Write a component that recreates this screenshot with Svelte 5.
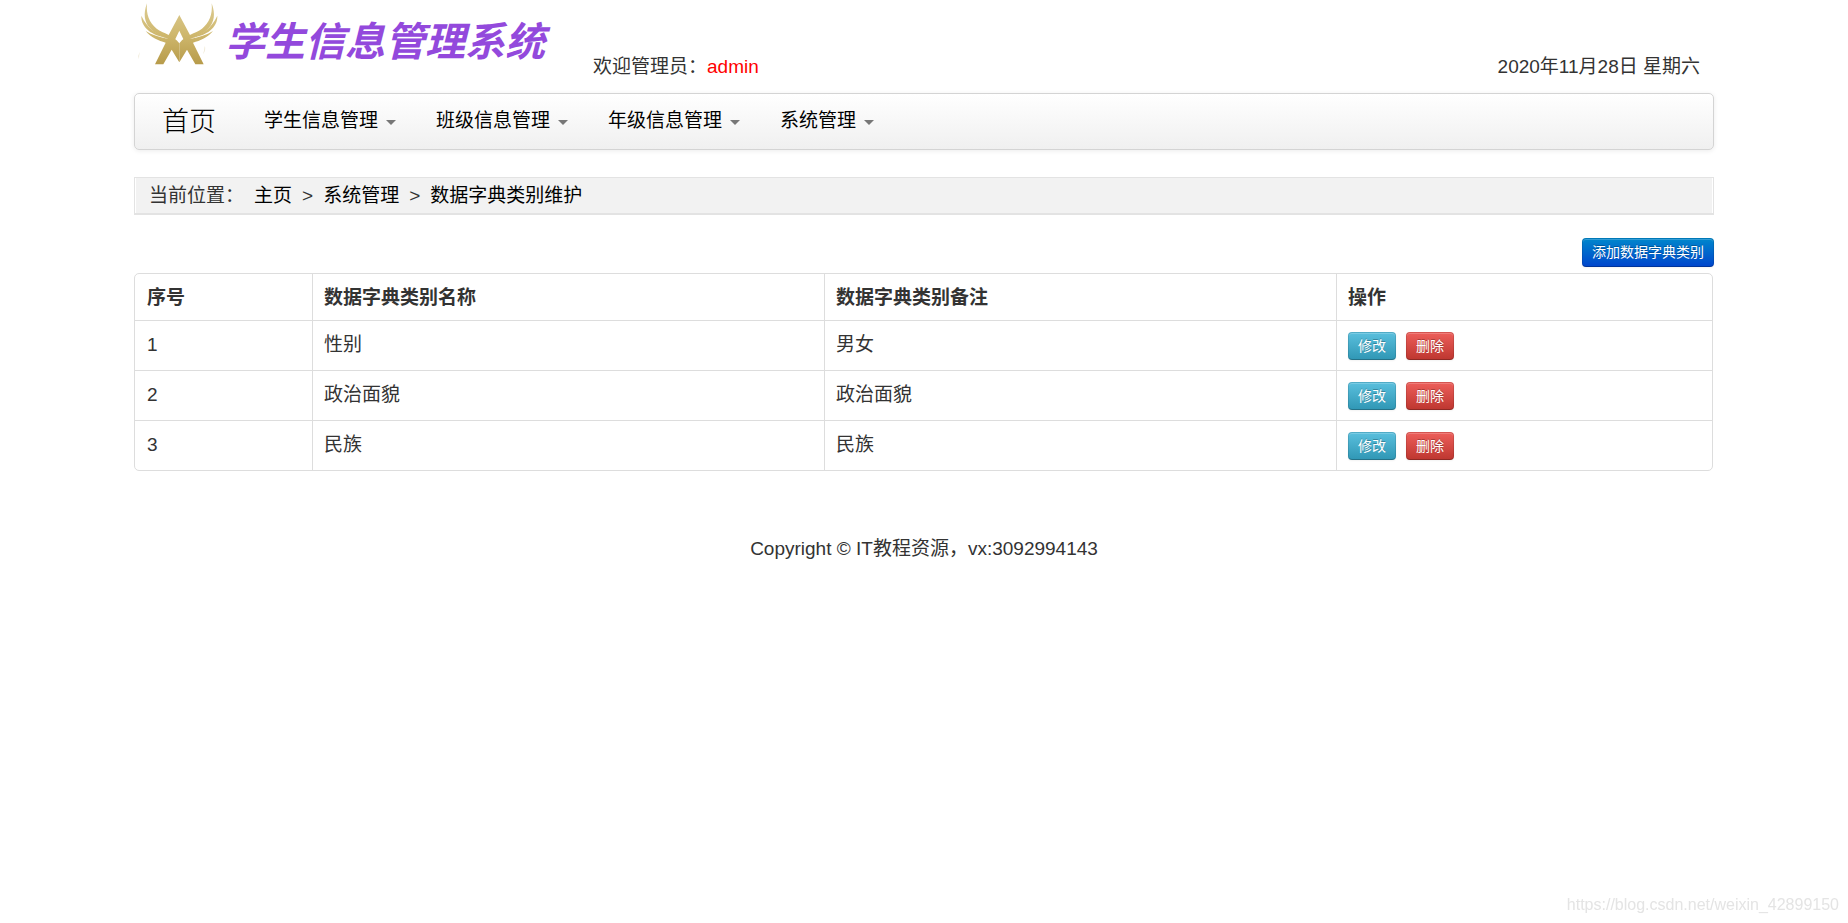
<script>
  const menus = ['学生信息管理', '班级信息管理', '年级信息管理', '系统管理'];
  const rows = [
    { id: 1, name: '性别', note: '男女' },
    { id: 2, name: '政治面貌', note: '政治面貌' },
    { id: 3, name: '民族', note: '民族' }
  ];
</script>

{#snippet wing()}
  <path d="M81 10 C78 45 88 68 110 86 C130 101 160 104 178 130 L178 187 L155 149 L130 193 H105 L137 128 C116 122 92 112 77 93 C96 105 118 111 146 117 C104 103 56 76 81 10 Z" />
  <path d="M64 47 C63 84 96 106 142 114 C108 101 82 86 64 47 Z" />
{/snippet}

<div class="container">
  <header>
    <a class="logo" href="#home" aria-label="学生信息管理系统">
      <svg viewBox="0 0 261 210" aria-hidden="true">
        <defs>
          <linearGradient id="gold" gradientUnits="userSpaceOnUse" x1="0" y1="10" x2="0" y2="193">
            <stop offset="0" stop-color="#dccb92" />
            <stop offset="0.5" stop-color="#cfb86e" />
            <stop offset="1" stop-color="#b79b4a" />
          </linearGradient>
        </defs>
        <g transform="translate(-42 0)" fill="url(#gold)">
          <path d="M178 45 L212 109 Q200 112 191 119 L178 92 L165 119 Q156 112 144 109 Z" />
          {@render wing()}
          <g transform="translate(356 0) scale(-1 1)">{@render wing()}</g>
          <path opacity="0.3" d="M59 155 Q53 166 57 178 Q57 166 59 155 Z M254 138 Q259 148 249 163 Q254 151 254 138 Z" />
        </g>
      </svg>
      <span>学生信息管理系统</span>
    </a>
    <p class="welcome">欢迎管理员：<strong>admin</strong></p>
    <time datetime="2020-11-28">2020年11月28日 星期六</time>
  </header>

  <nav class="navbar">
    <a class="brand" href="#home">首页</a>
    {#each menus as menu}
      <a class="menu" href="#menu">{menu}<i class="caret"></i></a>
    {/each}
  </nav>

  <nav class="breadcrumb" aria-label="当前位置">
    <span>当前位置：</span>
    <a href="#home">主页</a>
    <span>&gt;</span>
    <a href="#system">系统管理</a>
    <span>&gt;</span>
    <a href="#dictionary">数据字典类别维护</a>
  </nav>

  <main>
    <div class="toolbar">
      <button class="btn primary" type="button">添加数据字典类别</button>
    </div>
    <table>
      <colgroup>
        <col class="c-id" /><col class="c-text" /><col class="c-text" /><col />
      </colgroup>
      <thead>
        <tr>
          <th>序号</th>
          <th>数据字典类别名称</th>
          <th>数据字典类别备注</th>
          <th>操作</th>
        </tr>
      </thead>
      <tbody>
        {#each rows as row (row.id)}
          <tr>
            <td>{row.id}</td>
            <td>{row.name}</td>
            <td>{row.note}</td>
            <td>
              <div class="actions">
                <button class="btn info" type="button">修改</button>
                <button class="btn danger" type="button">删除</button>
              </div>
            </td>
          </tr>
        {/each}
      </tbody>
    </table>
  </main>

  <footer>Copyright © IT教程资源，vx:3092994143</footer>
</div>
<div class="watermark">https://blog.csdn.net/weixin_42899150</div>

<style>
  :global(body) {
    background: #fff;
  }
  .container,
  .watermark,
  .btn {
    font-family: 'Liberation Sans', 'Noto Sans CJK SC', sans-serif;
  }
  .container {
    box-sizing: border-box;
    max-width: 1620px;
    margin: 0 auto;
    padding: 0 20px;
    color: #333;
    font-size: 19px;
    font-weight: 400;
    line-height: 26px;
  }
  a {
    color: #000;
    text-decoration: none;
  }
  header {
    display: flex;
    align-items: flex-end;
    height: 80px;
    margin-bottom: 13px;
  }
  .logo {
    display: flex;
    align-self: flex-start;
    width: 459px;
  }
  .logo svg {
    width: 87px;
    height: 70px;
    flex: none;
  }
  .logo span {
    margin-left: 4px;
    padding-top: 14px;
    color: #9349dc;
    font-size: 40px;
    font-style: italic;
    font-weight: 700;
    line-height: 56px;
    white-space: nowrap;
  }
  .welcome {
    margin: 0;
  }
  .welcome strong {
    color: #f00;
    font-weight: 400;
  }
  time {
    margin-left: auto;
    padding-right: 14px;
  }
  .navbar {
    display: flex;
    align-items: center;
    height: 55px;
    padding: 0 8px;
    border: 1px solid #d4d4d4;
    border-radius: 5px;
    background: linear-gradient(#fff, #f0f0f0);
    box-shadow: 0 1px 5px rgba(0, 0, 0, 0.08);
  }
  .brand {
    padding: 0 28px 0 19px;
    font-size: 27px;
    font-weight: 300;
  }
  .menu {
    display: flex;
    align-items: center;
    gap: 8px;
    padding: 0 20px 2px;
  }
  .caret {
    border: 5px solid transparent;
    border-top-color: #777;
    border-bottom: 0;
    margin-top: 4px;
  }
  .breadcrumb {
    display: flex;
    gap: 10px;
    margin: 27px 0 23px;
    padding: 5px 14px;
    border: 1px solid #e3e3e3;
    border-bottom-width: 2px;
    background: #f2f2f2;
    box-shadow: inset 1px 0 #fff, inset -1px 0 #fff;
    line-height: 25px;
  }
  .toolbar {
    display: flex;
    justify-content: flex-end;
    margin-bottom: 6px;
  }
  .btn {
    height: 28px;
    padding: 0 9px 1px;
    border: 1px solid;
    border-color: rgba(0, 0, 0, 0.1) rgba(0, 0, 0, 0.1) rgba(0, 0, 0, 0.25);
    border-radius: 4px;
    background-origin: border-box;
    box-shadow: inset 0 1px 0 rgba(255, 255, 255, 0.2), 0 1px 2px rgba(0, 0, 0, 0.05);
    color: #fff;
    font-size: 14px;
    line-height: 20px;
    text-shadow: 0 -1px 0 rgba(0, 0, 0, 0.25);
  }
  .primary {
    height: 29px;
    padding-bottom: 2px;
    background-image: linear-gradient(#08c, #04c);
  }
  .info {
    background-image: linear-gradient(#5bc0de, #2f96b4);
  }
  .danger {
    background-image: linear-gradient(#ee5f5b, #bd362f);
  }
  table {
    width: calc(100% - 1px);
    table-layout: fixed;
    border: 1px solid #ddd;
    border-radius: 5px;
    border-spacing: 0;
  }
  .c-id {
    width: 177px;
  }
  .c-text {
    width: 512px;
  }
  th,
  td {
    box-sizing: border-box;
    height: 50px;
    padding: 11px 11px 9px;
    border-left: 1px solid #ddd;
    border-top: 1px solid #ddd;
    text-align: left;
    vertical-align: top;
  }
  th {
    height: 46px;
    border-top: 0;
    font-weight: 700;
  }
  th:first-child,
  td:first-child {
    padding-left: 12px;
    border-left: 0;
  }
  .actions {
    display: flex;
    gap: 10px;
  }
  footer {
    margin-top: 65px;
    text-align: center;
  }
  .watermark {
    position: fixed;
    right: 9px;
    bottom: 8px;
    color: #e4e4e4;
    font-size: 16px;
    line-height: 20px;
  }
</style>
